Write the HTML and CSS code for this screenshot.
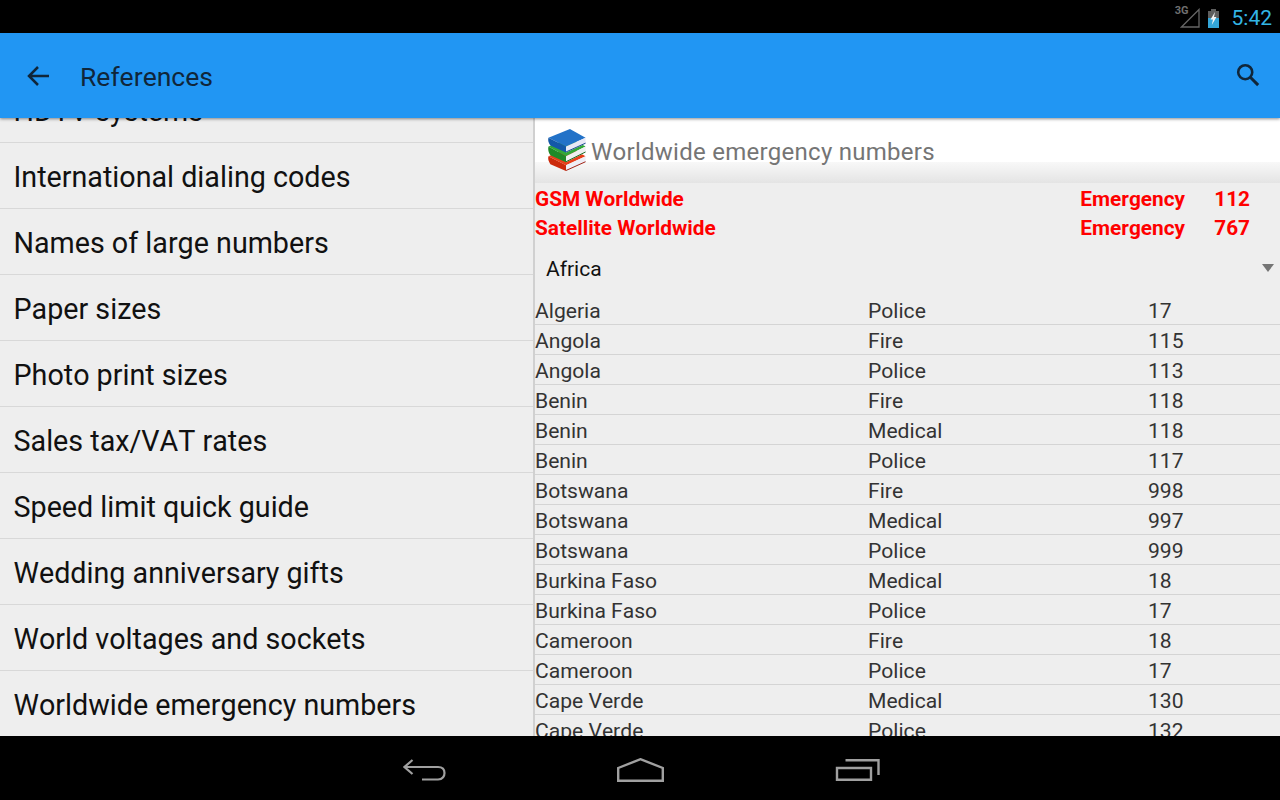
FILE: index.html
```html
<!DOCTYPE html>
<html lang="en">
<head>
  <meta charset="UTF-8">
  <title>References</title>
  <link rel="stylesheet" href="styles.css">
</head>
<body>
  <!-- Status bar -->
  <div class="status-bar">
    <span class="net-label">3G</span>
    <svg class="signal" width="20" height="20" viewBox="0 0 20 20"><path d="M19 1.500V19H1.500Z" fill="none" stroke="#666" stroke-width="1.300"/></svg>
    <svg class="battery" width="11" height="19" viewBox="0 0 11 19">
      <rect x="3" y="0" width="5" height="2" fill="#5e5e5e"/>
      <rect x="0" y="2" width="11" height="7" fill="#5e5e5e"/>
      <rect x="0" y="9" width="11" height="10" fill="#33a5d8"/>
      <path d="M7 3L2.500 10.500H5L3.800 16L8.500 8H6Z" fill="#f4f4f4"/>
    </svg>
    <span class="clock">5:42</span>
  </div>

  <!-- App bar -->
  <header class="app-bar">
    <svg class="back-icon" width="22" height="20" viewBox="0 0 22 20"><path d="M22 10H2.500M11 1L2 10L11 19" fill="none" stroke="#10263a" stroke-width="2.500"/></svg>
    <h1 class="app-title">References</h1>
    <svg class="search-icon" width="24" height="24" viewBox="0 0 26 26"><circle cx="10" cy="10" r="7.600" fill="none" stroke="#10263a" stroke-width="2.800"/><path d="M15.500 15.500L24 24" stroke="#10263a" stroke-width="3.200"/></svg>
  </header>

  <main class="content">
    <!-- Left menu -->
    <ul class="menu">
      <li class="menu-item">HDTV systems</li>
      <li class="menu-item">International dialing codes</li>
      <li class="menu-item">Names of large numbers</li>
      <li class="menu-item">Paper sizes</li>
      <li class="menu-item">Photo print sizes</li>
      <li class="menu-item">Sales tax/VAT rates</li>
      <li class="menu-item">Speed limit quick guide</li>
      <li class="menu-item">Wedding anniversary gifts</li>
      <li class="menu-item">World voltages and sockets</li>
      <li class="menu-item">Worldwide emergency numbers</li>
    </ul>

    <!-- Detail pane -->
    <section class="detail">
      <div class="detail-head">
        <svg class="book-icon" width="40" height="43" viewBox="7 4 40 44">
          <!-- red book -->
          <path d="M8 33L30 24L46 33L26 42Z" fill="#e8401a"/>
          <path d="M8 33L26 42V48L10 41Q7 37 8 33Z" fill="#cc2a0c"/>
          <path d="M26 42L46 33V39L26 48Z" fill="#eeeef6"/>
          <path d="M26 47.500L46 38.500" stroke="#a02010" fill="none"/>
          <!-- green book -->
          <path d="M8 23L30 14L46 23L26 33Z" fill="#32a838"/>
          <path d="M8 23L26 33V39L10 32Q7 28 8 23Z" fill="#1f8a28"/>
          <path d="M26 33L46 23V29L26 39Z" fill="#eef0f0"/>
          <path d="M26 38.500L46 28.500" stroke="#1c6e22" fill="none"/>
          <!-- blue book -->
          <path d="M8 14L30 5L46 14L26 23Z" fill="#2272c8"/>
          <path d="M8 14L26 23V29L10 22Q7 18 8 14Z" fill="#1458a8"/>
          <path d="M26 23L46 14V20L26 29Z" fill="#e8e8f6"/>
          <path d="M26 28.500L46 19.500" stroke="#1a4a90" fill="none"/>
        </svg>
        <h2 class="detail-title">Worldwide emergency numbers</h2>
      </div>
      <div class="head-fade"></div>

      <div class="global-list">
        <div class="global-row"><span class="global-name">GSM Worldwide</span><span class="global-type">Emergency</span><span class="global-num">112</span></div>
        <div class="global-row"><span class="global-name">Satellite Worldwide</span><span class="global-type">Emergency</span><span class="global-num">767</span></div>
      </div>

      <div class="region-select">
        <span>Africa</span>
        <span class="select-arrow"></span>
      </div>

      <div class="number-list" id="numberList"></div>
    </section>
  </main>

  <!-- Nav bar -->
  <nav class="nav-bar">
    <svg width="43" height="22" viewBox="0 0 43 22"><path d="M9.500 1L1.500 8L9.500 15M2 8H35Q41.500 8 41.500 14T35 20.500H19" fill="none" stroke="#a0a0a0" stroke-width="2.200"/></svg>
    <svg width="47" height="24" viewBox="0 0 47 24"><path d="M1.200 10L23.500 1.200L45.800 10V22.800H1.200Z" fill="none" stroke="#a0a0a0" stroke-width="2.400"/></svg>
    <svg width="45" height="22" viewBox="0 0 45 22"><path d="M10.500 1.200H43.500V16M2 9H36V20.800H2Z" fill="none" stroke="#a0a0a0" stroke-width="2.400"/></svg>
  </nav>

  <script>
    var rows = [
      ['Algeria', 'Police', '17'], ['Angola', 'Fire', '115'], ['Angola', 'Police', '113'],
      ['Benin', 'Fire', '118'], ['Benin', 'Medical', '118'], ['Benin', 'Police', '117'],
      ['Botswana', 'Fire', '998'], ['Botswana', 'Medical', '997'], ['Botswana', 'Police', '999'],
      ['Burkina Faso', 'Medical', '18'], ['Burkina Faso', 'Police', '17'],
      ['Cameroon', 'Fire', '18'], ['Cameroon', 'Police', '17'],
      ['Cape Verde', 'Medical', '130'], ['Cape Verde', 'Police', '132']
    ];
    var list = document.getElementById('numberList');
    rows.forEach(function (r) {
      var row = document.createElement('div');
      row.className = 'number-row';
      r.forEach(function (text) {
        var cell = document.createElement('span');
        cell.textContent = text;
        row.appendChild(cell);
      });
      list.appendChild(row);
    });
  </script>
</body>
</html>
```

FILE: styles.css
```css
* {
  box-sizing: border-box;
  margin: 0;
  padding: 0;
}

body {
  font-family: Roboto, sans-serif;
  font-kerning: none;
  width: 1280px;
  height: 800px;
  display: flex;
  flex-direction: column;
  overflow: hidden;
  background: #000;
}

/* Status bar */
.status-bar {
  height: 33px;
  background: #000;
  display: flex;
  align-items: center;
  justify-content: flex-end;
  padding-right: 8px;
}

.net-label {
  font-size: 11px;
  font-weight: 700;
  color: #6f6f6f;
  margin-right: -9px;
  margin-top: -12px;
}

.signal {
  margin-right: 8px;
  margin-top: 3px;
}

.battery {
  margin-right: 13px;
  margin-top: 3px;
}

.clock {
  font-size: 21px;
  color: #33b5e5;
  margin-top: 2px;
}

/* App bar */
.app-bar {
  height: 85px;
  background: #2196f3;
  display: flex;
  align-items: center;
  padding: 0 20px 0 27px;
  box-shadow: 0 1px 3px rgba(0, 0, 0, 0.45);
  position: relative;
  z-index: 2;
}

.back-icon {
  margin-right: 31px;
  flex: none;
}

.app-title {
  font-size: 26.5px;
  font-weight: 400;
  color: #10263a;
  flex: 1;
  padding-top: 2px;
}

.search-icon {
  margin-top: -2px;
}

/* Main panes */
.content {
  height: 618px;
  display: flex;
  background: #eee;
  overflow: hidden;
}

.menu {
  width: 535px;
  flex: none;
  list-style: none;
  display: flex;
  flex-direction: column;
  justify-content: flex-end;
  border-right: 2px solid #d0d0d0;
}

.menu-item {
  height: 66px;
  flex: none;
  display: flex;
  align-items: center;
  padding: 2px 0 0 13.5px;
  font-size: 28.7px;
  color: #111;
  border-top: 1px solid #d8d8d8;
}

.detail {
  flex: 1;
  min-width: 0;
}

.detail-head {
  height: 44px;
  background: #fff;
  display: flex;
  align-items: flex-start;
  padding: 10px 0 0 12px;
}

.book-icon {
  flex: none;
  margin-right: 4px;
  position: relative;
  z-index: 1;
}

.detail-title {
  font-size: 24px;
  font-weight: 400;
  color: #757575;
  letter-spacing: 0.26px;
  margin-top: 10px;
  white-space: nowrap;
}

.head-fade {
  height: 21px;
  background: linear-gradient(#f8f8f8, #e4e4e4);
}

.global-list {
  padding-top: 1px;
}

.global-row {
  height: 29px;
  display: flex;
  align-items: center;
  padding-right: 30px;
  font-size: 20.8px;
  font-weight: 700;
  color: #f00;
}

.global-name {
  flex: 1;
}

.global-num {
  width: 65px;
  text-align: right;
}

.region-select {
  height: 53px;
  display: flex;
  align-items: center;
  justify-content: space-between;
  padding: 0 6px 0 11px;
  font-size: 21px;
  color: #111;
}

.select-arrow {
  width: 0;
  height: 0;
  border-left: 6px solid transparent;
  border-right: 6px solid transparent;
  border-top: 8px solid #757575;
  margin-top: -1px;
}

.number-row {
  height: 30px;
  display: grid;
  grid-template-columns: 333px 280px 1fr;
  align-items: center;
  padding-top: 2px;
  font-size: 21.1px;
  color: #333;
  border-bottom: 1px solid #d4d4d4;
}

/* Nav bar */
.nav-bar {
  flex: 1;
  background: #000;
  display: flex;
  align-items: center;
  justify-content: center;
  gap: 171px;
  padding: 3px 0 0 3px;
}
```
